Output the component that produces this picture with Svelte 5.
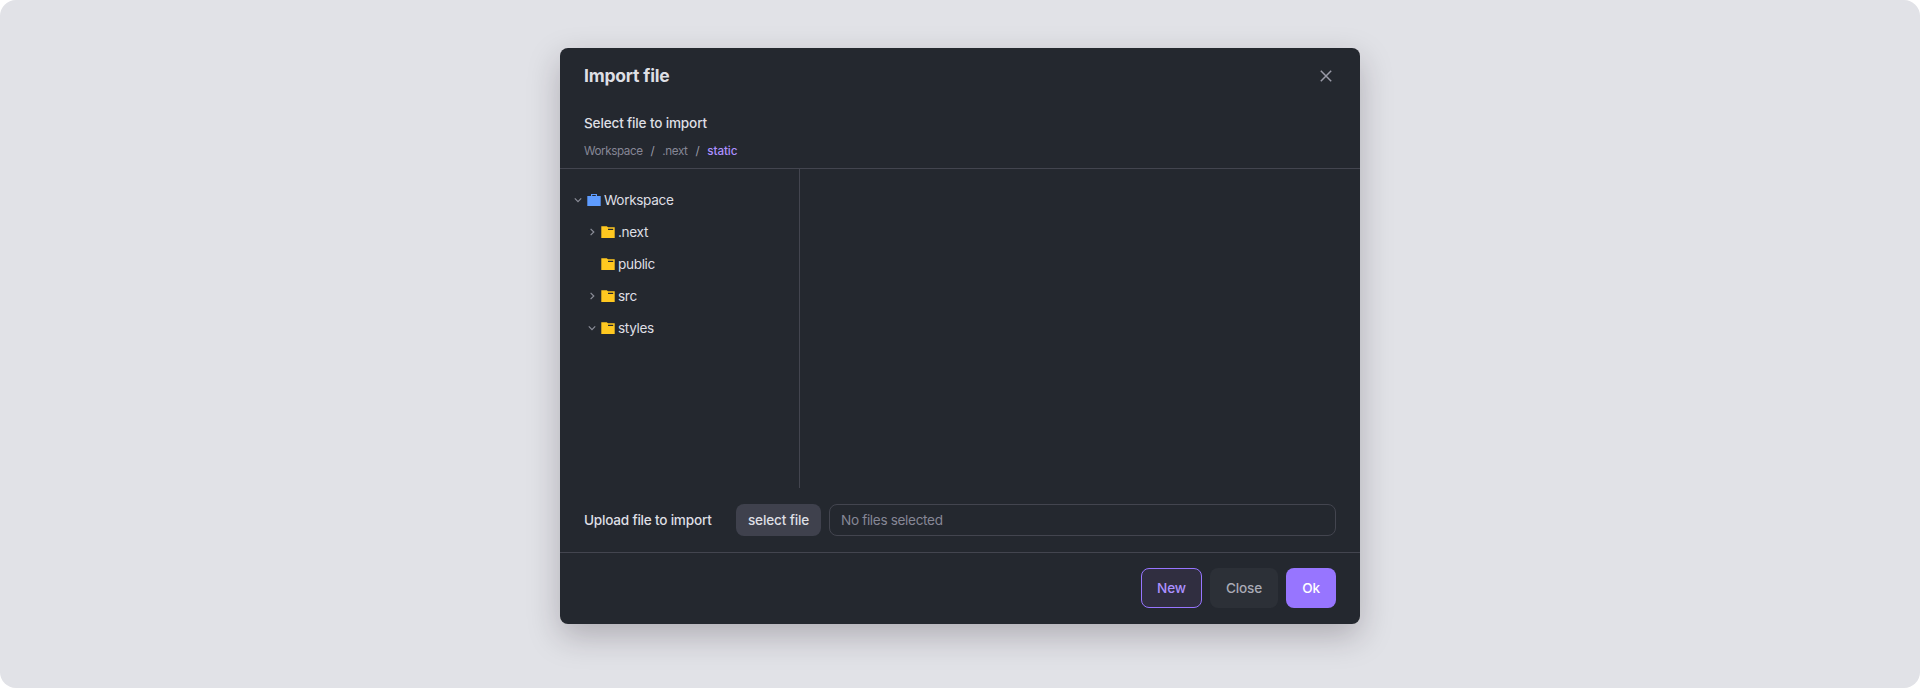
<script>
  const crumbs = ['Workspace', '.next', 'static'];
  const nodes = [
    { name: 'Workspace', depth: 0, state: 'open', kind: 'workspace' },
    { name: '.next', depth: 1, state: 'closed', kind: 'folder' },
    { name: 'public', depth: 1, state: 'leaf', kind: 'folder' },
    { name: 'src', depth: 1, state: 'closed', kind: 'folder' },
    { name: 'styles', depth: 1, state: 'open', kind: 'folder' }
  ];
</script>

<main class="stage">
  <div class="dialog" role="dialog" aria-label="Import file">
    <header class="head">
      <h1>Import file</h1>
      <button class="dismiss" aria-label="Dismiss">
        <svg width="16" height="16" viewBox="0 0 16 16"><path d="M2.8 2.8l10.4 10.4M13.2 2.8L2.8 13.2" /></svg>
      </button>
    </header>

    <section class="intro">
      <h2>Select file to import</h2>
      <nav class="crumbs">
        {#each crumbs as crumb, i}
          {#if i > 0}<span class="sep">/</span>{/if}
          <span class:current={i === crumbs.length - 1}>{crumb}</span>
        {/each}
      </nav>
    </section>

    <div class="browser">
      <ul class="tree">
        {#each nodes as node}
          <li class:child={node.depth === 1}>
            <svg class="chevron" width="10" height="10" viewBox="0 0 10 10">
              {#if node.state === 'open'}
                <path d="M1.8 3.4L5 6.6l3.2-3.2" />
              {:else if node.state === 'closed'}
                <path d="M3.6 1.8L6.8 5 3.6 8.2" />
              {/if}
            </svg>
            {#if node.kind === 'workspace'}
              <svg class="workspace" width="14" height="12" viewBox="0 0 14 12">
                <path fill-rule="evenodd" d="M4 0h6v2h3.7v10H.3V2H4zM5.2 1v1h3.6V1z" />
              </svg>
            {:else}
              <svg class="folder" width="14" height="12" viewBox="0 0 14 12">
                <path fill-rule="evenodd" d="M.3.3h5.4L7 1.3h6.7V12H.3zM7 2.8v1.1h5.2V2.8z" />
              </svg>
            {/if}
            <span>{node.name}</span>
          </li>
        {/each}
      </ul>
      <div class="files"></div>
    </div>

    <section class="upload">
      <span class="label">Upload file to import</span>
      <button class="select">select file</button>
      <div class="field">No files selected</div>
    </section>

    <footer>
      <button class="new">New</button>
      <button class="close">Close</button>
      <button class="ok">Ok</button>
    </footer>
  </div>
</main>

<style>
  :global(body) {
    margin: 0;
    background: #fff;
  }
  * {
    box-sizing: border-box;
  }
  .stage {
    height: 688px;
    padding-top: 48px;
    border-radius: 16px;
    background: #e1e2e7;
    overflow: hidden;
    font-family: Inter, sans-serif;
    font-size: 13.6px;
    letter-spacing: -0.34px;
    color: #dedfe4;
  }
  .dialog {
    width: 800px;
    height: 576px;
    margin: 0 auto;
    display: flex;
    flex-direction: column;
    border-radius: 8px;
    background: #24282f;
    box-shadow: 0 12px 32px rgba(33, 18, 33, 0.25);
  }
  h1,
  h2 {
    margin: 0;
  }
  button {
    padding: 0;
    border: 0;
    border-radius: 8px;
    background: none;
    font: inherit;
    letter-spacing: inherit;
  }
  .head {
    height: 56px;
    padding: 0 24px;
    display: flex;
    align-items: center;
    justify-content: space-between;
  }
  h1 {
    padding-bottom: 1px;
    font-size: 17.5px;
    font-weight: 650;
    letter-spacing: -0.2px;
  }
  .dismiss {
    width: 20px;
    height: 20px;
    display: grid;
    place-items: center;
  }
  .dismiss path {
    fill: none;
    stroke: #9a9ba8;
    stroke-width: 1.5;
  }
  .intro {
    height: 65px;
    padding: 8px 24px 0;
    border-bottom: 1px solid #43454f;
  }
  h2 {
    font-size: 13.6px;
    font-weight: 450;
    line-height: 22px;
    letter-spacing: -0.17px;
  }
  .crumbs {
    display: flex;
    gap: 8px;
    margin-top: 8px;
    font-size: 11.7px;
    line-height: 18px;
    letter-spacing: -0.43px;
    color: #868796;
  }
  .sep {
    color: #9a9ba8;
  }
  .current {
    color: #ac90ff;
    font-weight: 500;
    letter-spacing: -0.1px;
  }
  .browser {
    height: 319px;
    display: flex;
  }
  .tree {
    width: 240px;
    margin: 0;
    padding: 15px 0 0 13px;
    list-style: none;
    border-right: 1px solid #43454f;
  }
  .files {
    flex: 1;
  }
  li {
    height: 32px;
    display: flex;
    align-items: center;
  }
  .child {
    padding-left: 14px;
  }
  .chevron {
    margin-right: 4px;
  }
  .chevron path {
    fill: none;
    stroke: #8b8d98;
    stroke-width: 1.2;
  }
  .workspace {
    fill: #5e9cff;
  }
  .folder {
    fill: #ffc820;
  }
  li span {
    margin: 0 0 1px 3px;
  }
  .upload {
    height: 65px;
    padding: 16px 24px;
    display: flex;
    border-bottom: 1px solid #43454f;
    line-height: 32px;
  }
  .label {
    width: 152px;
    font-weight: 450;
    letter-spacing: -0.22px;
  }
  .select {
    width: 85px;
    height: 32px;
    margin-right: 8px;
    background: #3f414d;
    color: #dedfe4;
    font-weight: 450;
    letter-spacing: -0.15px;
  }
  .field {
    flex: 1;
    height: 32px;
    padding-left: 11px;
    border: 1px solid #43454f;
    border-radius: 8px;
    line-height: 30px;
    color: #868796;
  }
  footer {
    padding: 15px 24px 0;
    display: flex;
    justify-content: flex-end;
    gap: 8px;
  }
  footer button {
    height: 40px;
    padding-bottom: 1px;
    font-weight: 450;
    letter-spacing: -0.15px;
  }
  .new {
    width: 61px;
    border: 1px solid #9775ff;
    background: #302e40;
    color: #ac90ff;
  }
  .close {
    width: 68px;
    background: #2c3037;
    color: #a9aab5;
  }
  .ok {
    width: 50px;
    background: #9775ff;
    color: #fff;
  }
</style>
